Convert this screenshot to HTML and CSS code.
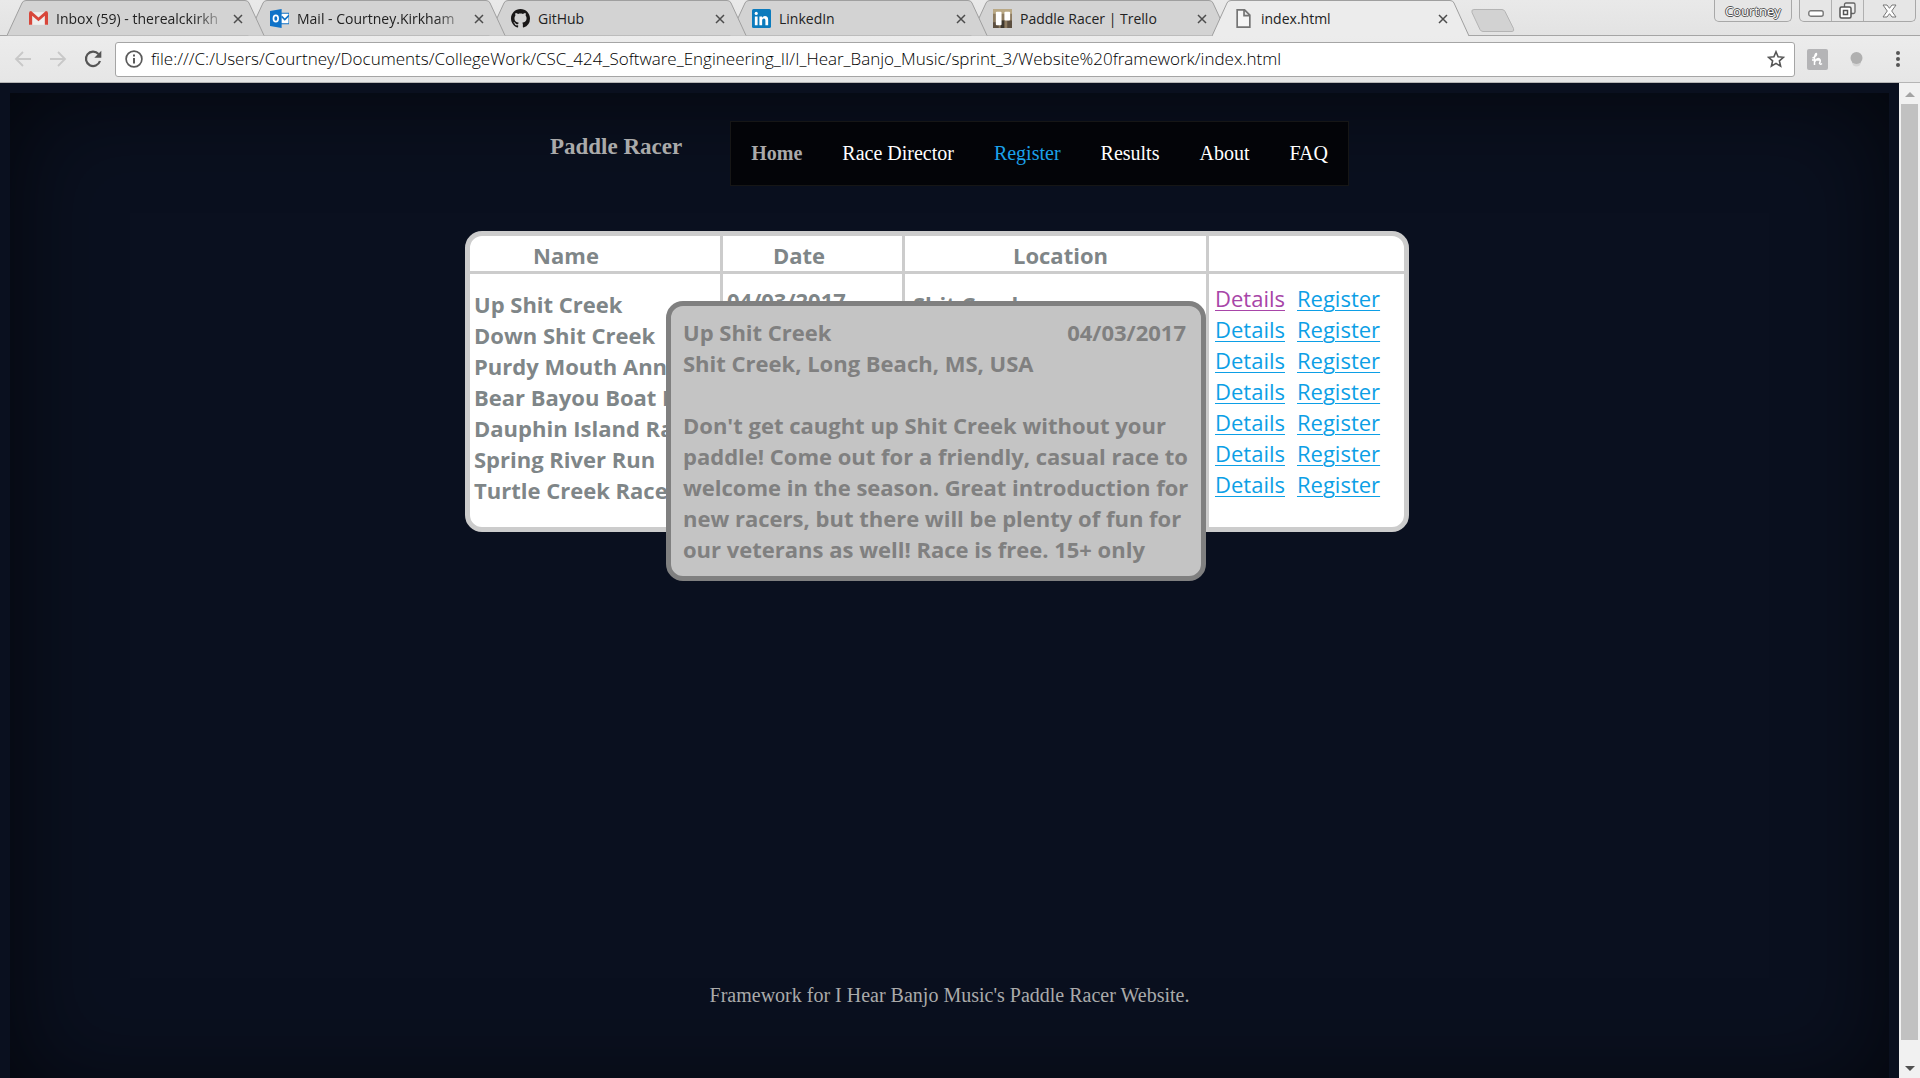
FILE: index.html
```
<!DOCTYPE html>
<html lang="en">
<head>
<meta charset="utf-8">
<title>index.html</title>
<link rel="stylesheet" href="styles.css">
</head>
<body>
<header class="browser">
  <div class="tabstrip">
    <div class="tabs">
      <div class="tab">
        <svg class="tab-shape" viewBox="0 0 258 36" preserveAspectRatio="none"><path d="M0 35.500L15 3Q16 .5 19 .5H238Q241 .5 242 3L257 35.500"/></svg>
        <svg class="favicon" viewBox="0 0 18 18"><path d="M1 3h16v12H1z" fill="#eee"/><path d="M0 15V4q0-2 2-2l7 6 7-6q2 0 2 2v11h-3V6.500l-6 5-6-5V15z" fill="#d8463a"/></svg>
        <span class="tab-title long">Inbox (59) - therealckirkh</span>
        <button class="close" aria-label="Close tab"><svg viewBox="0 0 10 10"><path d="M1 1l8 8M9 1L1 9"/></svg></button>
      </div>
      <div class="tab">
        <svg class="tab-shape" viewBox="0 0 258 36" preserveAspectRatio="none"><path d="M0 35.500L15 3Q16 .5 19 .5H238Q241 .5 242 3L257 35.500"/></svg>
        <svg class="favicon" viewBox="0 0 18 18"><path d="M10 4h8v10h-8z" fill="#fff" stroke="#1072c6"/><path d="M11 7l3 3 4-4" fill="none" stroke="#1072c6" stroke-width="1.500"/><path d="M0 2l11-2v18L0 16z" fill="#0e72c8"/><ellipse cx="5.500" cy="9" rx="2.200" ry="3" fill="none" stroke="#fff" stroke-width="1.600"/></svg>
        <span class="tab-title long">Mail - Courtney.Kirkham</span>
        <button class="close" aria-label="Close tab"><svg viewBox="0 0 10 10"><path d="M1 1l8 8M9 1L1 9"/></svg></button>
      </div>
      <div class="tab">
        <svg class="tab-shape" viewBox="0 0 258 36" preserveAspectRatio="none"><path d="M0 35.500L15 3Q16 .5 19 .5H238Q241 .5 242 3L257 35.500"/></svg>
        <svg class="favicon" viewBox="0 0 16 16"><path fill="#191717" d="M8 0C3.580 0 0 3.580 0 8c0 3.540 2.290 6.530 5.470 7.590.4.070.55-.17.55-.38 0-.19-.01-.82-.01-1.490-2.010.37-2.530-.49-2.690-.94-.09-.23-.48-.94-.82-1.130-.28-.15-.68-.52-.01-.53.63-.01 1.080.58 1.230.82.72 1.210 1.870.87 2.330.66.070-.52.28-.87.51-1.070-1.780-.2-3.640-.89-3.640-3.950 0-.87.31-1.590.82-2.150-.08-.2-.36-1.020.08-2.120 0 0 .67-.21 2.200.82.64-.18 1.320-.27 2-.27s1.360.09 2 .27c1.530-1.040 2.200-.82 2.200-.82.44 1.100.16 1.920.08 2.120.51.56.82 1.270.82 2.150 0 3.070-1.870 3.750-3.650 3.950.29.25.54.73.54 1.480 0 1.070-.01 1.930-.01 2.200 0 .21.15.46.55.38A8.010 8.010 0 0 0 16 8c0-4.420-3.580-8-8-8z"/></svg>
        <span class="tab-title">GitHub</span>
        <button class="close" aria-label="Close tab"><svg viewBox="0 0 10 10"><path d="M1 1l8 8M9 1L1 9"/></svg></button>
      </div>
      <div class="tab">
        <svg class="tab-shape" viewBox="0 0 258 36" preserveAspectRatio="none"><path d="M0 35.500L15 3Q16 .5 19 .5H238Q241 .5 242 3L257 35.500"/></svg>
        <svg class="favicon" viewBox="0 0 18 18"><rect width="18" height="18" rx="1.500" fill="#0b7bbd"/><path fill="#fff" d="M2.700 7h2.600v8.300H2.700zM7 7h2.500v1.200q1-1.500 2.700-1.500 3.100 0 3.100 3.500v5.100h-2.600v-4.600q0-1.800-1.400-1.800-1.700 0-1.700 1.900v4.500H7z"/><circle cx="4" cy="4.200" r="1.500" fill="#fff"/></svg>
        <span class="tab-title">LinkedIn</span>
        <button class="close" aria-label="Close tab"><svg viewBox="0 0 10 10"><path d="M1 1l8 8M9 1L1 9"/></svg></button>
      </div>
      <div class="tab">
        <svg class="tab-shape" viewBox="0 0 258 36" preserveAspectRatio="none"><path d="M0 35.500L15 3Q16 .5 19 .5H238Q241 .5 242 3L257 35.500"/></svg>
        <svg class="favicon" viewBox="0 0 20 20"><rect width="20" height="20" rx="2" fill="#8d7b60"/><path d="M0 0h20v5H0z" fill="#b9a885"/><path d="M0 14h6v6H0zM15 12h5v8h-5z" fill="#5c4f40"/><path d="M8 12h4v8H8z" fill="#3d372e"/><rect x="3" y="3" width="6" height="14" rx="1" fill="#fff"/><rect x="12" y="3" width="6" height="9" rx="1" fill="#fff"/></svg>
        <span class="tab-title">Paddle Racer | Trello</span>
        <button class="close" aria-label="Close tab"><svg viewBox="0 0 10 10"><path d="M1 1l8 8M9 1L1 9"/></svg></button>
      </div>
      <div class="tab active">
        <svg class="tab-shape" viewBox="0 0 258 36" preserveAspectRatio="none"><path d="M0 36L15 3Q16 .5 19 .5H238Q241 .5 242 3L257 36"/></svg>
        <svg class="favicon" viewBox="0 0 18 18"><path d="M3 .8h7l5 5v11.400H3zM9.500 1v5.300H15" fill="#f6f6f6" stroke="#757575" stroke-width="1.600"/></svg>
        <span class="tab-title">index.html</span>
        <button class="close" aria-label="Close tab"><svg viewBox="0 0 10 10"><path d="M1 1l8 8M9 1L1 9"/></svg></button>
      </div>
    </div>
    <button class="new-tab" aria-label="New tab"><svg viewBox="0 0 44 23"><path d="M3 .5H31q2 0 3 2l8.500 17q1 3-1.500 3H12q-2 0-3-2L1 3.500Q0 .5 3 .5z" fill="#d2d2d2" stroke="#b4b4b4"/></svg></button>
    <div class="window-controls">
      <button class="profile">Courtney</button>
      <div class="control-group">
        <button class="minimize" aria-label="Minimize"><svg viewBox="0 0 16 7"><rect x=".8" y=".8" width="14.400" height="5.400" rx="2" fill="#fff" stroke="#777" stroke-width="1.400"/></svg></button>
        <button class="restore" aria-label="Restore"><svg viewBox="0 0 17 17"><rect x="5.500" y="1" width="10.500" height="10.500" rx="1.500" fill="#eee" stroke="#666" stroke-width="1.300"/><rect x="1" y="5" width="11" height="11" rx="1.500" fill="#fff" stroke="#555" stroke-width="1.500"/><rect x="4.500" y="8.500" width="4" height="4" fill="#fff" stroke="#555" stroke-width="1.500"/></svg></button>
        <button class="shut" aria-label="Close window"><svg viewBox="0 0 15 14"><path d="M1 1h4l2.500 3.300L10 1h4l-4.300 6 4.300 6h-4L7.500 9.700 5 13H1l4.300-6z" fill="#fff" stroke="#777"/></svg></button>
      </div>
    </div>
  </div>
  <div class="toolbar">
    <button class="tool" aria-label="Back"><svg viewBox="0 0 18 18"><path d="M17 9H2M9 2L2 9l7 7" fill="none" stroke="#c8c8c8" stroke-width="1.800"/></svg></button>
    <button class="tool" aria-label="Forward"><svg viewBox="0 0 18 18"><path d="M1 9h15M9 2l7 7-7 7" fill="none" stroke="#c8c8c8" stroke-width="1.800"/></svg></button>
    <button class="tool" aria-label="Reload"><svg viewBox="0 0 18 18"><path d="M14.500 4A7.200 7.200 0 1 0 16 11" fill="none" stroke="#555" stroke-width="2.200"/><path d="M17.300 .8v7h-7z" fill="#555"/></svg></button>
    <div class="omnibox">
      <svg class="info" viewBox="0 0 18 18"><circle cx="9" cy="9" r="7.900" fill="none" stroke="#5a5a5a" stroke-width="1.700"/><path d="M8 8h2v5.500H8zM8 4.500h2v2H8z" fill="#5a5a5a"/></svg>
      <input class="url" type="text" aria-label="Address" value="file:///C:/Users/Courtney/Documents/CollegeWork/CSC_424_Software_Engineering_II/I_Hear_Banjo_Music/sprint_3/Website%20framework/index.html">
      <button class="star" aria-label="Bookmark"><svg viewBox="0 0 18 18"><path d="M9 1.800l2.100 5 5.400.5-4.100 3.600 1.200 5.300L9 13.400l-4.600 2.800 1.200-5.300L1.500 7.300l5.400-.5z" fill="none" stroke="#555" stroke-width="1.600"/></svg></button>
    </div>
    <button class="extension" aria-label="Honey"><svg viewBox="0 0 21 21"><rect width="21" height="21" rx="2" fill="#b4b4b6"/><path d="M5.500 9Q10 7 9.500 5T7.500 8V16M7.500 13q3-4.500 4.800-3.200T12.500 14.500q.8 1.500 2.500 0M5 11h8" fill="none" stroke="#fff" stroke-width="1.500"/></svg></button>
    <button class="extension bulb" aria-label="Extension"><svg viewBox="0 0 21 21"><circle cx="9.500" cy="13" r="4.500" fill="#d4d4d4"/><circle cx="9.500" cy="9" r="6" fill="#b0b0b0"/></svg></button>
    <button class="menu" aria-label="Menu"><svg viewBox="0 0 6 18"><circle cx="3" cy="3" r="2"/><circle cx="3" cy="9" r="2"/><circle cx="3" cy="15" r="2"/></svg></button>
  </div>
</header>

<div class="viewport">
  <div class="page">
    <div class="masthead">
      <h1 class="brand">Paddle Racer</h1>
      <nav class="nav">
        <a class="current" href="#">Home</a>
        <a href="#">Race Director</a>
        <a class="hover" href="#">Register</a>
        <a href="#">Results</a>
        <a href="#">About</a>
        <a href="#">FAQ</a>
      </nav>
    </div>
    <main class="main">
      <div class="board">
        <table class="races">
          <thead>
            <tr><th class="name">Name</th><th class="date">Date</th><th class="place">Location</th><th class="links"></th></tr>
          </thead>
          <tbody>
            <tr><td class="name">Up Shit Creek</td><td class="date">04/03/2017</td><td class="place">Shit Creek</td><td class="links"><a class="visited" href="#">Details</a><a href="#">Register</a></td></tr>
            <tr><td class="name">Down Shit Creek</td><td class="date"></td><td class="place"></td><td class="links"><a href="#">Details</a><a href="#">Register</a></td></tr>
            <tr><td class="name">Purdy Mouth Annual</td><td class="date"></td><td class="place"></td><td class="links"><a href="#">Details</a><a href="#">Register</a></td></tr>
            <tr><td class="name">Bear Bayou Boat Race</td><td class="date"></td><td class="place"></td><td class="links"><a href="#">Details</a><a href="#">Register</a></td></tr>
            <tr><td class="name">Dauphin Island Race</td><td class="date"></td><td class="place"></td><td class="links"><a href="#">Details</a><a href="#">Register</a></td></tr>
            <tr><td class="name">Spring River Run</td><td class="date"></td><td class="place"></td><td class="links"><a href="#">Details</a><a href="#">Register</a></td></tr>
            <tr><td class="name">Turtle Creek Race</td><td class="date"></td><td class="place"></td><td class="links"><a href="#">Details</a><a href="#">Register</a></td></tr>
          </tbody>
        </table>
        <section class="popup">
          <div class="popup-head"><span>Up Shit Creek</span><span>04/03/2017</span></div>
          <p class="popup-place">Shit Creek, Long Beach, MS, USA</p>
          <p>Don't get caught up Shit Creek without your<br>paddle! Come out for a friendly, casual race to<br>welcome in the season. Great introduction for<br>new racers, but there will be plenty of fun for<br>our veterans as well! Race is free. 15+ only</p>
        </section>
      </div>
    </main>
    <footer class="footer">Framework for I Hear Banjo Music's Paddle Racer Website.</footer>
  </div>
  <div class="scrollbar">
    <svg class="arrow" viewBox="0 0 10 5"><path d="M5 0l5 5H0z" fill="#a3a3a3"/></svg>
    <div class="thumb"></div>
    <svg class="arrow" viewBox="0 0 10 5"><path d="M0 0h10L5 5z" fill="#505050"/></svg>
  </div>
</div>
</body>
</html>
```
FILE: styles.css
```
* { box-sizing: border-box; }
body {
  margin: 0;
  height: 100vh;
  display: flex;
  flex-direction: column;
  overflow: hidden;
  background: #0a101f;
  font-family: "Liberation Serif", "Times New Roman", serif;
}
button { padding: 0; border: 0; background: none; font: inherit; color: inherit; }
svg { display: block; }

/* Browser frame */
.browser { flex: none; font-family: "Open Sans", "Noto Sans", sans-serif; color: #222; }
.tabstrip {
  display: flex;
  align-items: flex-start;
  height: 36px;
  padding: 0 4px 0 7px;
  background: linear-gradient(#e9e9e9, #e3e3e3);
  border-bottom: 1px solid #a5a5a5;
}
.tabs { display: flex; }
.tab {
  position: relative;
  display: flex;
  align-items: center;
  width: 258px;
  height: 36px;
  margin-right: -17px;
  padding: 1px 22px 0 22px;
  font-size: 14px;
}
.tab:nth-child(1) { z-index: 5; }
.tab:nth-child(2) { z-index: 4; }
.tab:nth-child(3) { z-index: 3; }
.tab:nth-child(4) { z-index: 2; }
.tab:nth-child(5) { z-index: 1; }
.tab.active { z-index: 6; }
.tab-shape {
  position: absolute;
  inset: 0;
  z-index: -1;
  width: 258px;
  height: 36px;
  fill: #d3d3d3;
  stroke: #9f9f9f;
}
.active .tab-shape { fill: #ececec; }
.favicon { flex: none; width: 19px; height: 19px; }
.tab-title { flex: 1; margin: 0 4px 0 8px; white-space: nowrap; }
.tab-title.long { mask-image: linear-gradient(90deg, #000 80%, transparent); }
.close svg { width: 10px; height: 10px; stroke: #4c4c4c; stroke-width: 1.500; }
.new-tab { margin: 9px 0 0 18px; }
.new-tab svg { width: 44px; height: 23px; }
.window-controls { display: flex; gap: 7px; margin-left: auto; }
.profile, .control-group {
  height: 22px;
  border: 1px solid #a8a8a8;
  border-top: 0;
  border-radius: 0 0 5px 5px;
  background: #e6e6e6;
}
.profile {
  width: 78px;
  font-size: 13px;
  line-height: 20px;
  color: #fff;
  text-shadow: 1px 0 #555, -1px 0 #555, 0 1px #555, 0 -1px #555;
}
.control-group { display: flex; width: 117px; }
.control-group button {
  display: flex;
  align-items: center;
  justify-content: center;
  width: 32px;
  border-right: 1px solid #b0b0b0;
}
.control-group button:last-child { flex: 1; border-right: 0; }
.minimize { padding-top: 5px; }
.minimize svg { width: 16px; height: 7px; }
.restore svg { width: 17px; height: 17px; }
.shut svg { width: 15px; height: 14px; }

.toolbar {
  display: flex;
  align-items: center;
  height: 47px;
  padding: 0 19px 0 14px;
  background: linear-gradient(#ececec, #e6e6e6);
  border-bottom: 1px solid #b5b5b5;
}
.tool { margin-right: 17px; }
.tool svg { width: 18px; height: 18px; }
.omnibox {
  display: flex;
  align-items: center;
  flex: 1;
  height: 35px;
  margin: 0 12px 0 -4px;
  padding: 0 9px 0 9px;
  background: #fff;
  border: 1px solid #a5a5a5;
  border-radius: 3px;
}
.info { width: 18px; height: 18px; }
.url {
  flex: 1;
  margin-left: 8px;
  padding: 0;
  border: 0;
  outline: 0;
  background: none;
  font: 300 17px/24px "Open Sans", "Noto Sans", sans-serif;
  color: #000;
}
.star svg { width: 18px; height: 18px; }
.extension { margin-right: 19px; }
.extension svg { width: 21px; height: 21px; }
.extension.bulb { margin-right: 27px; }
.menu svg { width: 6px; height: 18px; fill: #555; }

/* Page */
.viewport { display: flex; flex: 1; min-height: 0; }
.page {
  display: flex;
  flex-direction: column;
  flex: 1;
  height: 1005px;
  margin: 10px;
  padding-top: 28px;
  background: #0a101f;
  box-shadow: inset 0 0 100px rgba(0, 0, 0, .65);
}
.masthead { display: flex; justify-content: center; align-items: flex-start; gap: 48px; }
.brand { margin: 12px 0 0; font-size: 23px; line-height: 28px; color: #aaa; }
.nav {
  display: flex;
  height: 65px;
  align-items: center;
  padding-bottom: 1px;
  border: 1px solid #161616;
  background: #030408;
}
.nav a { padding: 0 20px; font-size: 20px; line-height: 24px; color: #fff; text-decoration: none; }
.nav .current { color: #aaa; font-weight: bold; }
.nav .hover { color: #1ba1ea; }

.main { display: flex; justify-content: center; padding: 45px 25px 0 0; }
.board {
  position: relative;
  border: 5px solid #ccc;
  border-radius: 17px;
  background: #fff;
  font: 700 22px/24px "Open Sans", "Noto Sans", sans-serif;
  color: #7f8688;
}
.races { width: 934px; table-layout: fixed; border-spacing: 0; }
.races th {
  height: 38px;
  padding: 2px 0 0;
  border-bottom: 3px solid #ccc;
  font-weight: 700;
}
.races th:not(:last-child), .races td:not(:last-child) { border-right: 3px solid #ccc; }
th.name { width: 253px; }
th.date { width: 182px; }
th.place { width: 304px; }
.races th.name { padding-right: 58px; }
.races th.date { padding-right: 27px; }
.races th.place { padding-left: 10px; }
.races td { padding: 6px 0 1px 4px; white-space: nowrap; vertical-align: top; }
.races td.date { padding-top: 2px; padding-bottom: 5px; }
.races td.place { padding-left: 8px; }
.races td.links { padding: 0 0 7px 6px; font-weight: 400; }
.races tbody tr:first-child td { padding-top: 18px; }
.races tbody tr:first-child td.date { padding-top: 14px; }
.races tbody tr:first-child td.links { padding-top: 12px; }
.races tbody tr:last-child td { padding-bottom: 25px; }
.links a { color: #0c9fe6; text-underline-offset: 3px; text-decoration-thickness: 1px; }
.links a + a { margin-left: 12px; }
.links .visited { color: #a845a8; }

.popup {
  position: absolute;
  left: 196px;
  top: 65px;
  width: 540px;
  padding: 11px 15px 11px 12px;
  border: 5px solid #808080;
  border-radius: 17px;
  background: #c4c4c4;
  color: #808080;
  line-height: 31px;
  white-space: nowrap;
}
.popup-head { display: flex; justify-content: space-between; }
.popup p { margin: 0; }
.popup .popup-place { margin-bottom: 31px; }

.footer {
  margin-top: auto;
  padding-bottom: 91px;
  text-align: center;
  font-size: 20px;
  line-height: 24px;
  color: #aaa;
}

.scrollbar {
  display: flex;
  flex-direction: column;
  align-items: center;
  width: 21px;
  padding: 9px 0 7px;
  background: #f1f1f1;
}
.arrow { width: 10px; height: 5px; }
.thumb { width: 17px; flex: 1; margin: 7px 0 26px; background: #c1c1c1; }
```
